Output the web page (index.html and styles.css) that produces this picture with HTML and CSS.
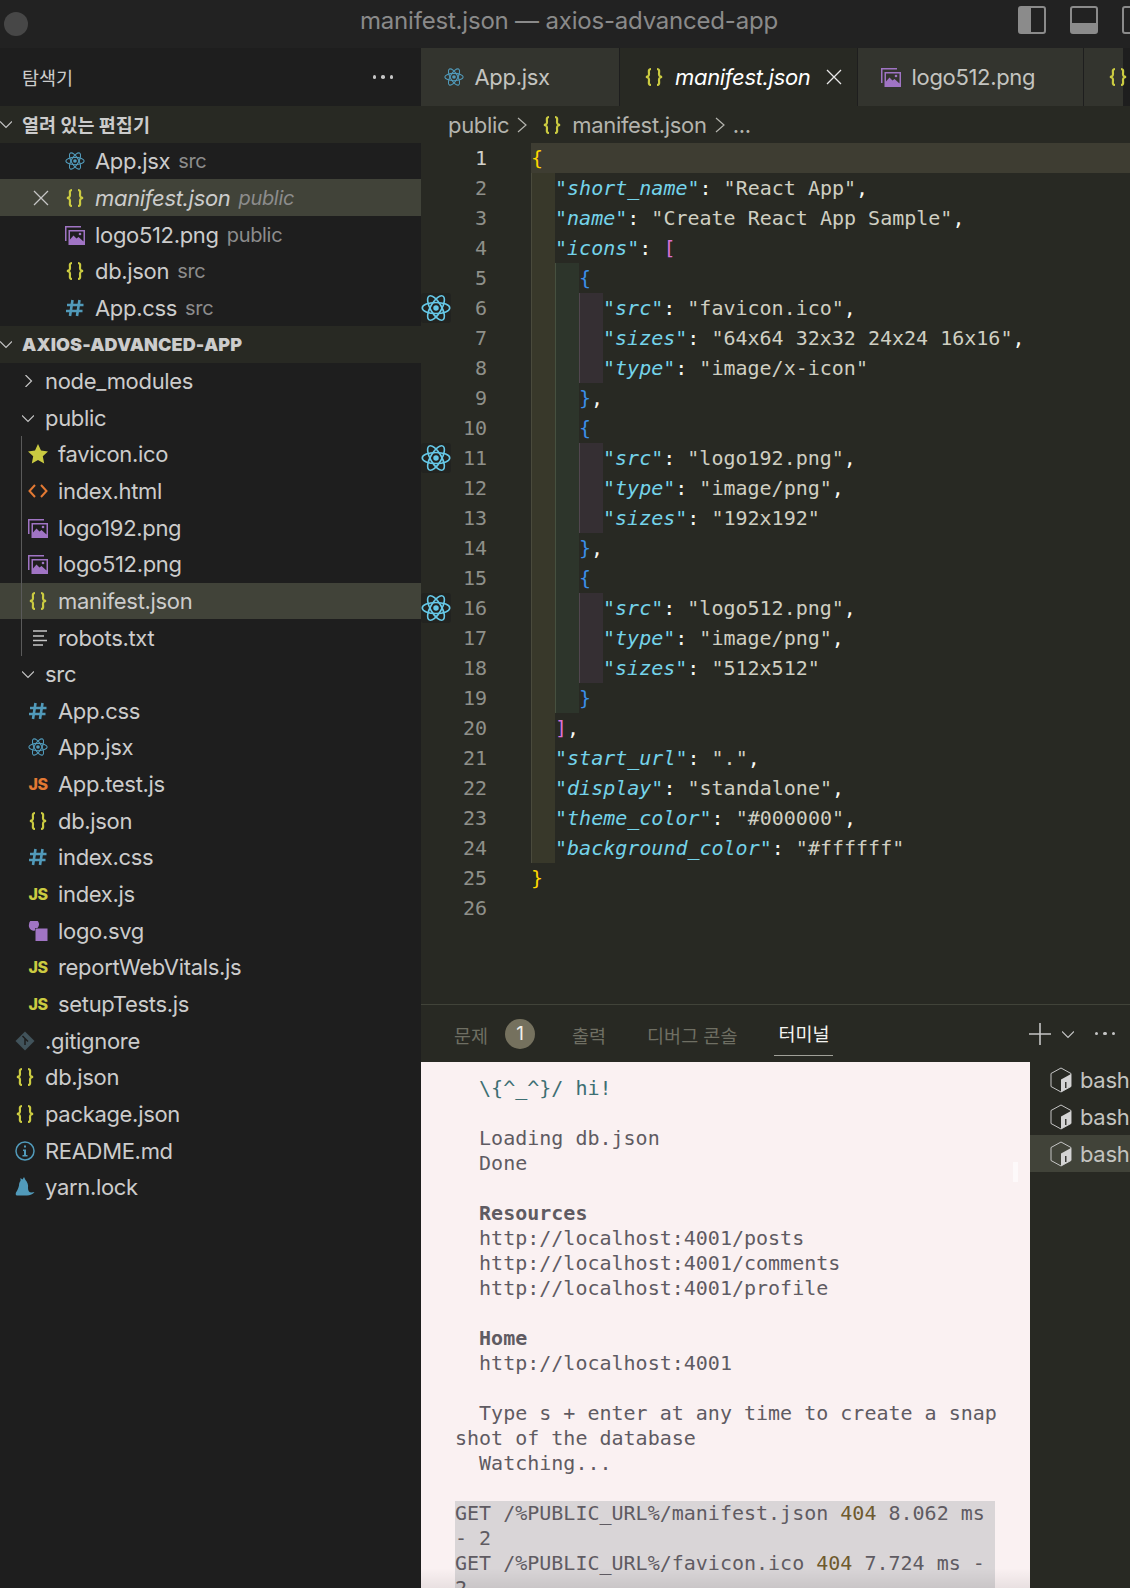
FILE: index.html
```html
<!DOCTYPE html>
<html lang="en">
<head>
    <meta charset="UTF-8">
    <meta name="viewport" content="width=device-width, initial-scale=1.0">
    <title>manifest.json — axios-advanced-app</title>
    <link rel="stylesheet" href="styles.css">
</head>
<body>
    <svg class="sprite" xmlns="http://www.w3.org/2000/svg">
        <symbol id="i-react" viewBox="0 0 24 24">
            <g fill="none" stroke="currentColor" stroke-width="1.3">
                <ellipse cx="12" cy="12" rx="11" ry="4.4"/>
                <ellipse cx="12" cy="12" rx="11" ry="4.4" transform="rotate(60 12 12)"/>
                <ellipse cx="12" cy="12" rx="11" ry="4.4" transform="rotate(120 12 12)"/>
            </g>
            <circle cx="12" cy="12" r="2.2" fill="currentColor"/>
        </symbol>
        <symbol id="i-json" viewBox="0 0 20 20">
            <path fill="none" stroke="#cbcb41" stroke-width="2.2" d="M7 2C4 2 5 5 5 7C5 9 4.500 9.600 2 10C4.500 10.400 5 11 5 13C5 15 4 18 7 18M13 2C16 2 15 5 15 7C15 9 15.500 9.600 18 10C15.500 10.400 15 11 15 13C15 15 16 18 13 18"/>
        </symbol>
        <symbol id="i-image" viewBox="0 0 20 20">
            <path fill="#a074c4" d="M0 1h16v1.500H1.500V16H0zM3.500 5H20v15H3.500zM5 6.500v8l3.500-4 3 3 2-1.500 5 4.500v-10z"/>
            <circle cx="15" cy="9" r="1.300" fill="#a074c4"/>
        </symbol>
        <symbol id="i-css" viewBox="0 0 20 20">
            <path fill="none" stroke="#519aba" stroke-width="2.600" d="M7.500 2L5 18M14.500 2L12 18M2 7h16.500M1 13h16.500"/>
        </symbol>
        <symbol id="i-html" viewBox="0 0 20 20">
            <path fill="none" stroke="#e37933" stroke-width="2" d="M7 4L1.500 10L7 16M13 4L18.500 10L13 16"/>
        </symbol>
        <symbol id="i-star" viewBox="0 0 20 20">
            <path fill="#cbcb41" d="M10 0L13 6.600L20 7.500L14.800 12.300L16.200 19.500L10 16L3.800 19.500L5.200 12.300L0 7.500L7 6.600z"/>
        </symbol>
        <symbol id="i-text" viewBox="0 0 20 20">
            <path fill="none" stroke="#c5c5c5" stroke-width="1.600" d="M5 3h14M5 8h11M5 12.500h14M5 17h10"/>
        </symbol>
        <symbol id="i-svg" viewBox="0 0 20 20">
            <path fill="#a074c4" d="M7 9.500V7h2.500A5 5 0 1 0 1 3.500A5 5 0 0 0 7 9.500zM7.500 7.500H19.500V20H7.500z"/>
        </symbol>
        <symbol id="i-git" viewBox="0 0 20 20">
            <path fill="#41535b" d="M10 0.500L19.500 10L10 19.500L0.500 10z"/>
            <path fill="none" stroke="#1e1e1e" stroke-width="1.500" d="M7.500 5L13 10.500M10 8V14"/>
        </symbol>
        <symbol id="i-info" viewBox="0 0 20 20">
            <circle cx="10" cy="10" r="9" fill="none" stroke="#519aba" stroke-width="1.500"/>
            <path fill="#519aba" d="M9 4.500h2v2H9zM8 8.500h3V14h1.500v1.500h-5V14H9v-4H8z"/>
        </symbol>
        <symbol id="i-yarn" viewBox="0 0 20 20">
            <path fill="#519aba" d="M9 0L10.500 3C12.500 5 13.500 8 13 11C13 13.500 14 15.500 16.500 15.500L19.500 15C18 17 15 18.500 12 18.500H2C0.500 18.500 0.500 17 1 15.500C2.500 13 3.500 11 4 8.500C4 6.500 4.500 5 5.500 4L5.500 1L7.500 2.500z"/>
        </symbol>
        <symbol id="i-bash" viewBox="0 0 22 26">
            <path fill="none" stroke="#c5c5c5" stroke-width="1" d="M11 1L21 6.500V19.500L11 25L1 19.500V6.500z"/>
            <path fill="#d4d4d4" d="M21 7V19.500L11 25V12.500z"/>
            <path fill="#3a3a36" d="M15 15h1.500v6H15z"/>
        </symbol>
    </svg>

    <header class="titlebar">
        <span class="window-dot"></span>
        <span class="window-title">manifest.json — axios-advanced-app</span>
        <div class="layout-icons">
            <span class="layout-icon layout-left"></span>
            <span class="layout-icon layout-bottom"></span>
            <span class="layout-icon"></span>
        </div>
    </header>

    <div class="main">
        <aside class="sidebar">
            <div class="sidebar-head">
                <span class="sidebar-title">탐색기</span>
                <span class="dots"><i></i><i></i><i></i></span>
            </div>

            <div class="section-head"><svg class="chev" viewBox="0 0 12 12"><path d="M0 3.500L6 9.500L12 3.500"/></svg>열려 있는 편집기</div>
            <div class="row open"><svg class="icon react-dim"><use href="#i-react"/></svg><span>App.jsx</span><span class="desc">src</span></div>
            <div class="row open selected"><svg class="close-x" viewBox="0 0 16 16"><path d="M1 1L15 15M15 1L1 15"/></svg><svg class="icon"><use href="#i-json"/></svg><em>manifest.json</em><em class="desc">public</em></div>
            <div class="row open"><svg class="icon"><use href="#i-image"/></svg><span>logo512.png</span><span class="desc">public</span></div>
            <div class="row open"><svg class="icon"><use href="#i-json"/></svg><span>db.json</span><span class="desc">src</span></div>
            <div class="row open"><svg class="icon"><use href="#i-css"/></svg><span>App.css</span><span class="desc">src</span></div>

            <div class="section-head"><svg class="chev" viewBox="0 0 12 12"><path d="M0 3.500L6 9.500L12 3.500"/></svg><b>AXIOS-ADVANCED-APP</b></div>
            <div class="row folder"><svg class="chev" viewBox="0 0 12 12"><path d="M3.500 0L9.500 6L3.500 12"/></svg><span>node_modules</span></div>
            <div class="row folder"><svg class="chev" viewBox="0 0 12 12"><path d="M0 3.500L6 9.500L12 3.500"/></svg><span>public</span></div>
            <div class="group">
                <div class="row nested"><svg class="icon"><use href="#i-star"/></svg><span>favicon.ico</span></div>
                <div class="row nested"><svg class="icon"><use href="#i-html"/></svg><span>index.html</span></div>
                <div class="row nested"><svg class="icon"><use href="#i-image"/></svg><span>logo192.png</span></div>
                <div class="row nested"><svg class="icon"><use href="#i-image"/></svg><span>logo512.png</span></div>
                <div class="row nested selected"><svg class="icon"><use href="#i-json"/></svg><span>manifest.json</span></div>
                <div class="row nested"><svg class="icon"><use href="#i-text"/></svg><span>robots.txt</span></div>
            </div>
            <div class="row folder"><svg class="chev" viewBox="0 0 12 12"><path d="M0 3.500L6 9.500L12 3.500"/></svg><span>src</span></div>
            <div class="row nested"><svg class="icon"><use href="#i-css"/></svg><span>App.css</span></div>
            <div class="row nested"><svg class="icon react-dim"><use href="#i-react"/></svg><span>App.jsx</span></div>
            <div class="row nested"><span class="js test">JS</span><span>App.test.js</span></div>
            <div class="row nested"><svg class="icon"><use href="#i-json"/></svg><span>db.json</span></div>
            <div class="row nested"><svg class="icon"><use href="#i-css"/></svg><span>index.css</span></div>
            <div class="row nested"><span class="js">JS</span><span>index.js</span></div>
            <div class="row nested"><svg class="icon"><use href="#i-svg"/></svg><span>logo.svg</span></div>
            <div class="row nested"><span class="js">JS</span><span>reportWebVitals.js</span></div>
            <div class="row nested"><span class="js">JS</span><span>setupTests.js</span></div>
            <div class="row top"><svg class="icon"><use href="#i-git"/></svg><span>.gitignore</span></div>
            <div class="row top"><svg class="icon"><use href="#i-json"/></svg><span>db.json</span></div>
            <div class="row top"><svg class="icon"><use href="#i-json"/></svg><span>package.json</span></div>
            <div class="row top"><svg class="icon"><use href="#i-info"/></svg><span>README.md</span></div>
            <div class="row top"><svg class="icon"><use href="#i-yarn"/></svg><span>yarn.lock</span></div>
        </aside>

        <section class="editor">
            <div class="tabs">
                <div class="tab tab-app"><svg class="icon react-dim"><use href="#i-react"/></svg><span>App.jsx</span></div>
                <div class="tab tab-manifest active"><svg class="icon"><use href="#i-json"/></svg><em>manifest.json</em><svg class="close-x" viewBox="0 0 16 16"><path d="M1 1L15 15M15 1L1 15"/></svg></div>
                <div class="tab tab-logo"><svg class="icon"><use href="#i-image"/></svg><span>logo512.png</span></div>
                <div class="tab tab-more"><svg class="icon"><use href="#i-json"/></svg></div>
            </div>
            <div class="crumbs">
                <span>public</span>
                <svg class="crumb-sep" viewBox="0 0 12 16"><path d="M2 1L10 8L2 15"/></svg>
                <svg class="icon crumb-icon"><use href="#i-json"/></svg>
                <span>manifest.json</span>
                <svg class="crumb-sep" viewBox="0 0 12 16"><path d="M2 1L10 8L2 15"/></svg>
                <span>...</span>
            </div>

            <div class="code">
                <div class="line current"><span class="glyph"></span><span class="num">1</span><span class="text"><span class="b-y">{</span></span></div>
                <div class="line"><span class="glyph"></span><span class="num">2</span><span class="text"><i class="g g1"></i><span class="q">"</span><span class="k">short_name</span><span class="q">"</span>: <span class="s">"React App"</span>,</span></div>
                <div class="line"><span class="glyph"></span><span class="num">3</span><span class="text"><i class="g g1"></i><span class="q">"</span><span class="k">name</span><span class="q">"</span>: <span class="s">"Create React App Sample"</span>,</span></div>
                <div class="line"><span class="glyph"></span><span class="num">4</span><span class="text"><i class="g g1"></i><span class="q">"</span><span class="k">icons</span><span class="q">"</span>: <span class="b-p">[</span></span></div>
                <div class="line"><span class="glyph"></span><span class="num">5</span><span class="text"><i class="g g1"></i><i class="g g2"></i><span class="b-b">{</span></span></div>
                <div class="line"><span class="glyph"><svg class="gutter-react"><use href="#i-react"/></svg></span><span class="num">6</span><span class="text"><i class="g g1"></i><i class="g g2"></i><i class="g g3"></i><span class="q">"</span><span class="k">src</span><span class="q">"</span>: <span class="s">"favicon.ico"</span>,</span></div>
                <div class="line"><span class="glyph"></span><span class="num">7</span><span class="text"><i class="g g1"></i><i class="g g2"></i><i class="g g3"></i><span class="q">"</span><span class="k">sizes</span><span class="q">"</span>: <span class="s">"64x64 32x32 24x24 16x16"</span>,</span></div>
                <div class="line"><span class="glyph"></span><span class="num">8</span><span class="text"><i class="g g1"></i><i class="g g2"></i><i class="g g3"></i><span class="q">"</span><span class="k">type</span><span class="q">"</span>: <span class="s">"image/x-icon"</span></span></div>
                <div class="line"><span class="glyph"></span><span class="num">9</span><span class="text"><i class="g g1"></i><i class="g g2"></i><span class="b-b">}</span>,</span></div>
                <div class="line"><span class="glyph"></span><span class="num">10</span><span class="text"><i class="g g1"></i><i class="g g2"></i><span class="b-b">{</span></span></div>
                <div class="line"><span class="glyph"><svg class="gutter-react"><use href="#i-react"/></svg></span><span class="num">11</span><span class="text"><i class="g g1"></i><i class="g g2"></i><i class="g g3"></i><span class="q">"</span><span class="k">src</span><span class="q">"</span>: <span class="s">"logo192.png"</span>,</span></div>
                <div class="line"><span class="glyph"></span><span class="num">12</span><span class="text"><i class="g g1"></i><i class="g g2"></i><i class="g g3"></i><span class="q">"</span><span class="k">type</span><span class="q">"</span>: <span class="s">"image/png"</span>,</span></div>
                <div class="line"><span class="glyph"></span><span class="num">13</span><span class="text"><i class="g g1"></i><i class="g g2"></i><i class="g g3"></i><span class="q">"</span><span class="k">sizes</span><span class="q">"</span>: <span class="s">"192x192"</span></span></div>
                <div class="line"><span class="glyph"></span><span class="num">14</span><span class="text"><i class="g g1"></i><i class="g g2"></i><span class="b-b">}</span>,</span></div>
                <div class="line"><span class="glyph"></span><span class="num">15</span><span class="text"><i class="g g1"></i><i class="g g2"></i><span class="b-b">{</span></span></div>
                <div class="line"><span class="glyph"><svg class="gutter-react"><use href="#i-react"/></svg></span><span class="num">16</span><span class="text"><i class="g g1"></i><i class="g g2"></i><i class="g g3"></i><span class="q">"</span><span class="k">src</span><span class="q">"</span>: <span class="s">"logo512.png"</span>,</span></div>
                <div class="line"><span class="glyph"></span><span class="num">17</span><span class="text"><i class="g g1"></i><i class="g g2"></i><i class="g g3"></i><span class="q">"</span><span class="k">type</span><span class="q">"</span>: <span class="s">"image/png"</span>,</span></div>
                <div class="line"><span class="glyph"></span><span class="num">18</span><span class="text"><i class="g g1"></i><i class="g g2"></i><i class="g g3"></i><span class="q">"</span><span class="k">sizes</span><span class="q">"</span>: <span class="s">"512x512"</span></span></div>
                <div class="line"><span class="glyph"></span><span class="num">19</span><span class="text"><i class="g g1"></i><i class="g g2"></i><span class="b-b">}</span></span></div>
                <div class="line"><span class="glyph"></span><span class="num">20</span><span class="text"><i class="g g1"></i><span class="b-p">]</span>,</span></div>
                <div class="line"><span class="glyph"></span><span class="num">21</span><span class="text"><i class="g g1"></i><span class="q">"</span><span class="k">start_url</span><span class="q">"</span>: <span class="s">"."</span>,</span></div>
                <div class="line"><span class="glyph"></span><span class="num">22</span><span class="text"><i class="g g1"></i><span class="q">"</span><span class="k">display</span><span class="q">"</span>: <span class="s">"standalone"</span>,</span></div>
                <div class="line"><span class="glyph"></span><span class="num">23</span><span class="text"><i class="g g1"></i><span class="q">"</span><span class="k">theme_color</span><span class="q">"</span>: <span class="s">"#000000"</span>,</span></div>
                <div class="line"><span class="glyph"></span><span class="num">24</span><span class="text"><i class="g g1"></i><span class="q">"</span><span class="k">background_color</span><span class="q">"</span>: <span class="s">"#ffffff"</span></span></div>
                <div class="line"><span class="glyph"></span><span class="num">25</span><span class="text"><span class="b-y">}</span></span></div>
                <div class="line"><span class="glyph"></span><span class="num">26</span><span class="text"></span></div>
            </div>

            <div class="panel">
                <div class="panel-tabs">
                    <span class="panel-tab">문제</span>
                    <span class="badge">1</span>
                    <span class="panel-tab tab-output">출력</span>
                    <span class="panel-tab tab-debug">디버그 콘솔</span>
                    <span class="panel-tab tab-term">터미널</span>
                    <div class="panel-actions">
                        <svg class="plus" viewBox="0 0 22 22"><path d="M11 0V22M0 11H22"/></svg>
                        <svg class="chev" viewBox="0 0 12 12"><path d="M0 3.500L6 9.500L12 3.500"/></svg>
                        <span class="dots small"><i></i><i></i><i></i></span>
                    </div>
                </div>
                <div class="panel-body">
                    <div class="terminal">
                        <div class="tl hi">  \{^_^}/ hi!</div>
                        <div class="tl"></div>
                        <div class="tl">  Loading db.json</div>
                        <div class="tl">  Done</div>
                        <div class="tl"></div>
                        <div class="tl bold">  Resources</div>
                        <div class="tl">  http://localhost:4001/posts</div>
                        <div class="tl">  http://localhost:4001/comments</div>
                        <div class="tl">  http://localhost:4001/profile</div>
                        <div class="tl"></div>
                        <div class="tl bold">  Home</div>
                        <div class="tl">  http://localhost:4001</div>
                        <div class="tl"></div>
                        <div class="tl">  Type s + enter at any time to create a snap</div>
                        <div class="tl">shot of the database</div>
                        <div class="tl">  Watching...</div>
                        <div class="tl"></div>
                        <div class="tl sel">GET /%PUBLIC_URL%/manifest.json <span class="code404">404</span> 8.062 ms</div>
                        <div class="tl sel">- 2</div>
                        <div class="tl sel">GET /%PUBLIC_URL%/favicon.ico <span class="code404">404</span> 7.724 ms -</div>
                        <div class="tl sel">2</div>
                        <span class="scroll-mark"></span>
                    </div>
                    <div class="term-list">
                        <div class="term-row"><svg class="bash-icon"><use href="#i-bash"/></svg>bash</div>
                        <div class="term-row"><svg class="bash-icon"><use href="#i-bash"/></svg>bash</div>
                        <div class="term-row selected"><svg class="bash-icon"><use href="#i-bash"/></svg>bash</div>
                    </div>
                </div>
            </div>
        </section>
    </div>
</body>
</html>
```

FILE: styles.css
```css
* {
    box-sizing: border-box;
}
body {
    margin: 0;
    width: 1130px;
    height: 1588px;
    overflow: hidden;
    background-color: #1e1e1e;
    color: #cccccc;
    font-family: Inter, "Noto Sans CJK KR", sans-serif;
    font-size: 22px;
    letter-spacing: -0.32px;
}
.sprite {
    display: none;
}
svg {
    flex: none;
}

/* title bar */
.titlebar {
    display: flex;
    align-items: center;
    height: 48px;
    padding-left: 4px;
    background: #222222;
}
.window-dot {
    width: 24px;
    height: 24px;
    border-radius: 50%;
    background: #474747;
}
.window-title {
    margin-left: 332px;
    padding-bottom: 8px;
    color: #8a8a8a;
    font-size: 24px;
    letter-spacing: -0.2px;
}
.layout-icons {
    display: flex;
    gap: 24px;
    margin-left: auto;
    margin-right: -20px;
    padding-bottom: 8px;
}
.layout-icon {
    width: 28px;
    height: 28px;
    border: 2px solid #8b8b8b;
    border-radius: 3px;
}
.layout-left {
    background: linear-gradient(90deg, #8b8b8b 46%, transparent 46%);
}
.layout-bottom {
    background: linear-gradient(0deg, #8b8b8b 36%, transparent 36%);
}

.main {
    display: flex;
    height: 1540px;
}

/* sidebar */
.sidebar {
    width: 421px;
    flex: none;
    background: #1e1e1e;
}
.sidebar-head {
    display: flex;
    align-items: center;
    justify-content: space-between;
    height: 58px;
    padding: 0 28px 0 22px;
}
.sidebar-title {
    font-size: 18.500px;
    letter-spacing: 0;
}
.dots {
    display: flex;
    gap: 5px;
}
.dots i {
    width: 3.500px;
    height: 3.500px;
    border-radius: 50%;
    background: #c5c5c5;
}
.section-head {
    display: flex;
    align-items: center;
    height: 36.660px;
    background: #282923;
    font-size: 18.500px;
    font-weight: 700;
    letter-spacing: 0;
}
.section-head .chev {
    margin-right: 10px;
}
.section-head b {
    font-size: 18px;
    letter-spacing: 0.1px;
}
.chev {
    width: 12px;
    height: 12px;
    fill: none;
    stroke: #c5c5c5;
    stroke-width: 1.200;
}
.row {
    display: flex;
    align-items: center;
    height: 36.660px;
    white-space: nowrap;
}
.row.selected {
    background: #414339;
}
.icon {
    width: 20px;
    height: 20px;
}
.react-dim {
    color: #519aba;
}
.row em {
    font-style: italic;
}
.row.open {
    padding-left: 65px;
    padding-top: 1px;
}
.row.open .icon {
    margin-right: 10px;
}
.row.open.selected {
    padding-left: 33px;
}
.row.open .close-x {
    margin-right: 16px;
}
.close-x {
    width: 16px;
    height: 16px;
    fill: none;
    stroke: #c5c5c5;
    stroke-width: 1.300;
}
.desc {
    margin-left: 8px;
    color: #8c8c8c;
    font-size: 20px;
}
.row.folder {
    padding-left: 22px;
}
.row.folder .chev {
    margin-right: 11px;
}
.row.nested {
    padding-left: 28px;
}
.row.nested .icon,
.row.nested .js {
    margin-right: 10px;
}
.row.top {
    padding-left: 15px;
}
.row.top .icon {
    margin-right: 10px;
}
.group {
    background: linear-gradient(#5a5a5a, #5a5a5a) 21px 0 / 1px 100% no-repeat;
}
.group .row.selected {
    background: linear-gradient(#5a5a5a, #5a5a5a) 21px 0 / 1px 100% no-repeat, #414339;
}
.js {
    width: 20px;
    flex: none;
    color: #cbcb41;
    font-size: 16px;
    font-weight: 800;
    text-align: center;
    letter-spacing: -0.5px;
}
.js.test {
    color: #e37933;
}

/* editor */
.editor {
    flex: 1;
    min-width: 0;
    display: flex;
    flex-direction: column;
    background: #282923;
}
.tabs {
    display: flex;
    height: 58px;
    flex: none;
    background: #1e1e1e;
}
.tab {
    display: flex;
    align-items: center;
    height: 100%;
    background: #33342e;
    border-right: 1px solid #1e1e1e;
    white-space: nowrap;
    color: #c4c4c0;
}
.tab-app {
    width: 199px;
    padding-left: 23px;
}
.tab-manifest {
    width: 238px;
    padding-left: 24px;
}
.tab-logo {
    width: 226px;
    padding-left: 23px;
}
.tab-more {
    width: 39px;
    padding-left: 24px;
    border-right: 0;
}
.tab .icon {
    margin-right: 10.500px;
}
.tab.active {
    background: #282923;
    color: #ffffff;
}
.tab.active .icon {
    margin-right: 11px;
}
.tab.active em {
    font-style: italic;
}
.tab .close-x {
    margin-left: 16px;
    stroke: #e8e8e8;
}
.crumbs {
    display: flex;
    align-items: center;
    gap: 7px;
    height: 37px;
    flex: none;
    padding-left: 27px;
    color: #b4b4ae;
}
.crumb-icon {
    margin: 0 3px 0 7px;
}
.crumb-sep {
    width: 12px;
    height: 16px;
    fill: none;
    stroke: #b4b4ae;
    stroke-width: 1.200;
}
.code {
    height: 861px;
    flex: none;
    font-family: "DejaVu Sans Mono", monospace;
    font-size: 20px;
    letter-spacing: 0;
    line-height: 30px;
    color: #f8f8f2;
}
.line {
    display: flex;
    height: 30px;
}
.glyph {
    width: 30px;
    flex: none;
    display: flex;
    align-items: center;
    justify-content: center;
}
.gutter-react {
    width: 30px;
    height: 30px;
    color: #66c9e8;
    background: #222320;
    border-radius: 3px;
}
.num {
    width: 36px;
    flex: none;
    margin-right: 44px;
    text-align: right;
    color: #8f908a;
}
.text {
    flex: 1;
    white-space: pre;
}
.line.current .text {
    background: #3e3d32;
}
.line.current .num {
    color: #d0d0ca;
}
.g {
    display: inline-block;
    width: 24px;
    height: 30px;
    vertical-align: top;
}
.g1 {
    background: #38382a;
    border-left: 1px solid #4a4a3c;
}
.g2 {
    background: #2d352b;
    border-left: 1px solid #46503f;
}
.g3 {
    background: #352f33;
    border-left: 1px solid #51464f;
}
.q {
    color: #74d3ea;
}
.k {
    color: #74d3ea;
    font-style: italic;
}
.s {
    color: #cfcfc2;
}
.b-y {
    color: #ffd700;
}
.b-p {
    color: #da70d6;
}
.b-b {
    color: #3b8fe8;
}

/* bottom panel */
.panel {
    flex: 1;
    min-height: 0;
    display: flex;
    flex-direction: column;
    border-top: 1px solid #414339;
}
.panel-tabs {
    display: flex;
    align-items: center;
    height: 57px;
    flex: none;
    padding-left: 33px;
    font-size: 18.500px;
    letter-spacing: 0;
    color: #6f6f63;
}
.panel-tab {
    padding-top: 2px;
}
.badge {
    width: 30px;
    height: 30px;
    margin-left: 17px;
    border-radius: 50%;
    background: #75715e;
    color: #f0f0ea;
    font-size: 19px;
    line-height: 30px;
    text-align: center;
}
.tab-output {
    margin-left: 37px;
}
.tab-debug {
    margin-left: 41px;
}
.tab-term {
    align-self: flex-start;
    display: flex;
    align-items: center;
    margin-left: 37px;
    padding: 5px 4px 0;
    height: 51px;
    border-bottom: 1.500px solid #a0a098;
    color: #f4f4f0;
}
.panel-actions {
    display: flex;
    align-items: center;
    margin-left: auto;
    padding-right: 15px;
}
.plus {
    width: 22px;
    height: 22px;
    margin-right: 11px;
    fill: none;
    stroke: #c5c5c5;
    stroke-width: 1.600;
}
.panel-actions .chev {
    margin-right: 21px;
}
.dots.small {
    gap: 5px;
}
.panel-body {
    flex: 1;
    min-height: 0;
    display: flex;
}
.terminal {
    position: relative;
    width: 609px;
    flex: none;
    padding: 14px 0 0 34px;
    overflow: hidden;
    background: #faf1f2;
    color: #5f5b62;
    font-family: "DejaVu Sans Mono", monospace;
    font-size: 20px;
    letter-spacing: 0;
    line-height: 25px;
}
.terminal::after {
    content: "";
    position: absolute;
    left: 0;
    right: 0;
    bottom: 0;
    height: 20px;
    background: linear-gradient(rgba(0, 0, 0, 0), rgba(0, 0, 0, 0.07));
}
.tl {
    height: 25px;
    white-space: pre;
}
.bold {
    font-weight: 700;
}
.hi {
    color: #3d6f73;
}
.sel {
    width: 540px;
    background: #d9d5d7;
}
.code404 {
    color: #6e5a2e;
}
.scroll-mark {
    position: absolute;
    left: 592px;
    top: 100px;
    width: 5px;
    height: 20px;
    background: rgba(255, 255, 255, 0.6);
}
.term-list {
    flex: 1;
    min-width: 0;
    overflow: hidden;
}
.term-row {
    display: flex;
    align-items: center;
    height: 36.640px;
    padding-left: 20px;
    color: #c4c4c0;
}
.term-row.selected {
    background: #414339;
}
.bash-icon {
    width: 22px;
    height: 26px;
    margin-right: 8px;
}
```
